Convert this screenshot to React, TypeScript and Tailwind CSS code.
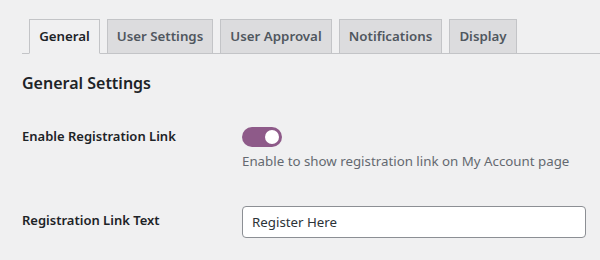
import React, { useState } from 'react';

const tabs = [
  { label: 'General', width: 'w-[71px]' },
  { label: 'User Settings', width: 'w-[106px]' },
  { label: 'User Approval', width: 'w-[112px]' },
  { label: 'Notifications', width: 'w-[103px]' },
  { label: 'Display', width: 'w-[68px]' },
];

const App: React.FC = () => {
  const [active, setActive] = useState('General');
  const [enabled, setEnabled] = useState(true);
  const [linkText, setLinkText] = useState('Register Here');

  return (
    <div className="w-[600px] h-[260px] overflow-hidden bg-[#f0f0f1] font-['Noto_Sans',sans-serif] text-[13.3px] text-[#1d2327]">
      {/* Tab navigation */}
      <div className="ml-[22px] pt-[19px] pl-[7px] flex gap-[7px] border-b border-[#c3c4c7]">
        {tabs.map((tab) => (
          <button
            key={tab.label}
            onClick={() => setActive(tab.label)}
            className={`${tab.width} h-[35px] -mb-px border border-[#c3c4c7] flex items-center justify-center text-[13.3px] font-semibold leading-none whitespace-nowrap ${
              active === tab.label
                ? 'bg-[#f0f0f1] text-[#1d2327] border-b-[#f0f0f1]'
                : 'bg-[#dcdcde] text-[#50575e]'
            }`}
          >
            {tab.label}
          </button>
        ))}
      </div>

      <div className="pl-[22px] pr-[14px]">
        <h2 className="mt-[17px] text-[16px] leading-[24px] font-semibold text-[#1d2327]">General Settings</h2>

        {/* Enable registration link */}
        <div className="mt-[31px] flex">
          <div className="w-[220px] shrink-0 leading-[20px] text-[13px] font-semibold">Enable Registration Link</div>
          <div className="flex flex-col">
            <button
              onClick={() => setEnabled(!enabled)}
              className={`mt-[1px] w-[40px] h-[20px] rounded-full flex items-center px-[3px] ${
                enabled ? 'bg-[#8e5a89] justify-end' : 'bg-[#c3c4c7] justify-start'
              }`}
            >
              <span className="w-[14px] h-[14px] rounded-full bg-white" />
            </button>
            <p className="mt-[4px] leading-[20px] text-[#646970] whitespace-nowrap">
              Enable to show registration link on My Account page
            </p>
          </div>
        </div>

        {/* Registration link text */}
        <div className="mt-[35px] flex">
          <div className="w-[220px] shrink-0 pt-[4px] leading-[20px] text-[13px] font-semibold">Registration Link Text</div>
          <input
            value={linkText}
            onChange={(e) => setLinkText(e.target.value)}
            className="w-[344px] h-[32px] shrink-0 px-[9px] bg-white border border-[#8c8f94] rounded-[4px] text-[13.3px] text-[#2c3338] outline-none"
          />
        </div>
      </div>
    </div>
  );
};

export default App;
